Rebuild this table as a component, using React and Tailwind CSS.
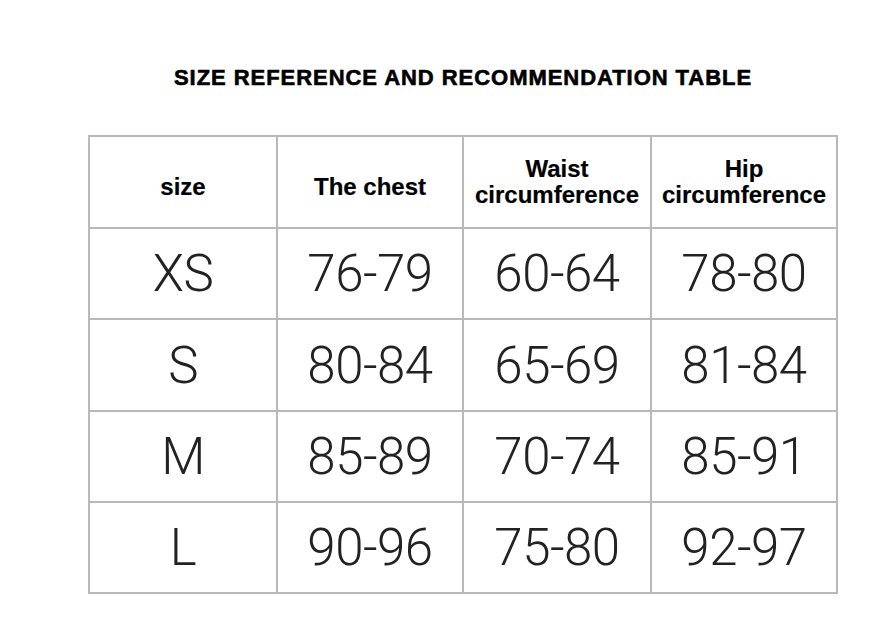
import React from 'react';

const headers = [
    { lines: ['size'] },
    { lines: ['The chest'] },
    { lines: ['Waist', 'circumference'] },
    { lines: ['Hip', 'circumference'] },
];

const rows = [
    ['XS', '76-79', '60-64', '78-80'],
    ['S', '80-84', '65-69', '81-84'],
    ['M', '85-89', '70-74', '85-91'],
    ['L', '90-96', '75-80', '92-97'],
];

const rowHeights = ['h-[89px]', 'h-[90px]', 'h-[89px]', 'h-[89px]'];

const App = () => {
    return (
        <div className="w-[869px] h-[617px] bg-white overflow-hidden">
            <div className="ml-[88px] w-[750px] pt-[67px]">
                <h1 className="text-center text-[22px] leading-[22px] font-bold tracking-[0.95px] text-black [-webkit-text-stroke:0.6px_black] font-['Liberation_Sans',Arial,sans-serif]">
                    SIZE REFERENCE AND RECOMMENDATION TABLE
                </h1>

                {/* table grid: the grey background shows through the gaps as lines */}
                <div className="mt-[46px] grid grid-cols-[186px_184px_186px_184px] gap-[2px] p-[2px] bg-[#b9b9b9]">
                    {headers.map((h, i) => (
                        <div
                            key={i}
                            className={`h-[90px] bg-white flex flex-col items-center justify-center text-[24px] leading-[26px] font-bold text-black [-webkit-text-stroke:0.2px_black] font-['Liberation_Sans',Arial,sans-serif] ${h.lines.length === 1 ? 'pt-[10px]' : ''}`}
                        >
                            {h.lines.map((l) => (
                                <span key={l}>{l}</span>
                            ))}
                        </div>
                    ))}

                    {rows.map((row, r) =>
                        row.map((cell, c) => (
                            <div
                                key={`${r}-${c}`}
                                className={`${rowHeights[r]} bg-white flex items-center justify-center text-[51px] leading-none font-light tracking-[-0.5px] text-[#222] font-['Roboto','Noto_Sans',sans-serif]`}
                            >
                                {cell}
                            </div>
                        ))
                    )}
                </div>
            </div>
        </div>
    );
};

export default App;
